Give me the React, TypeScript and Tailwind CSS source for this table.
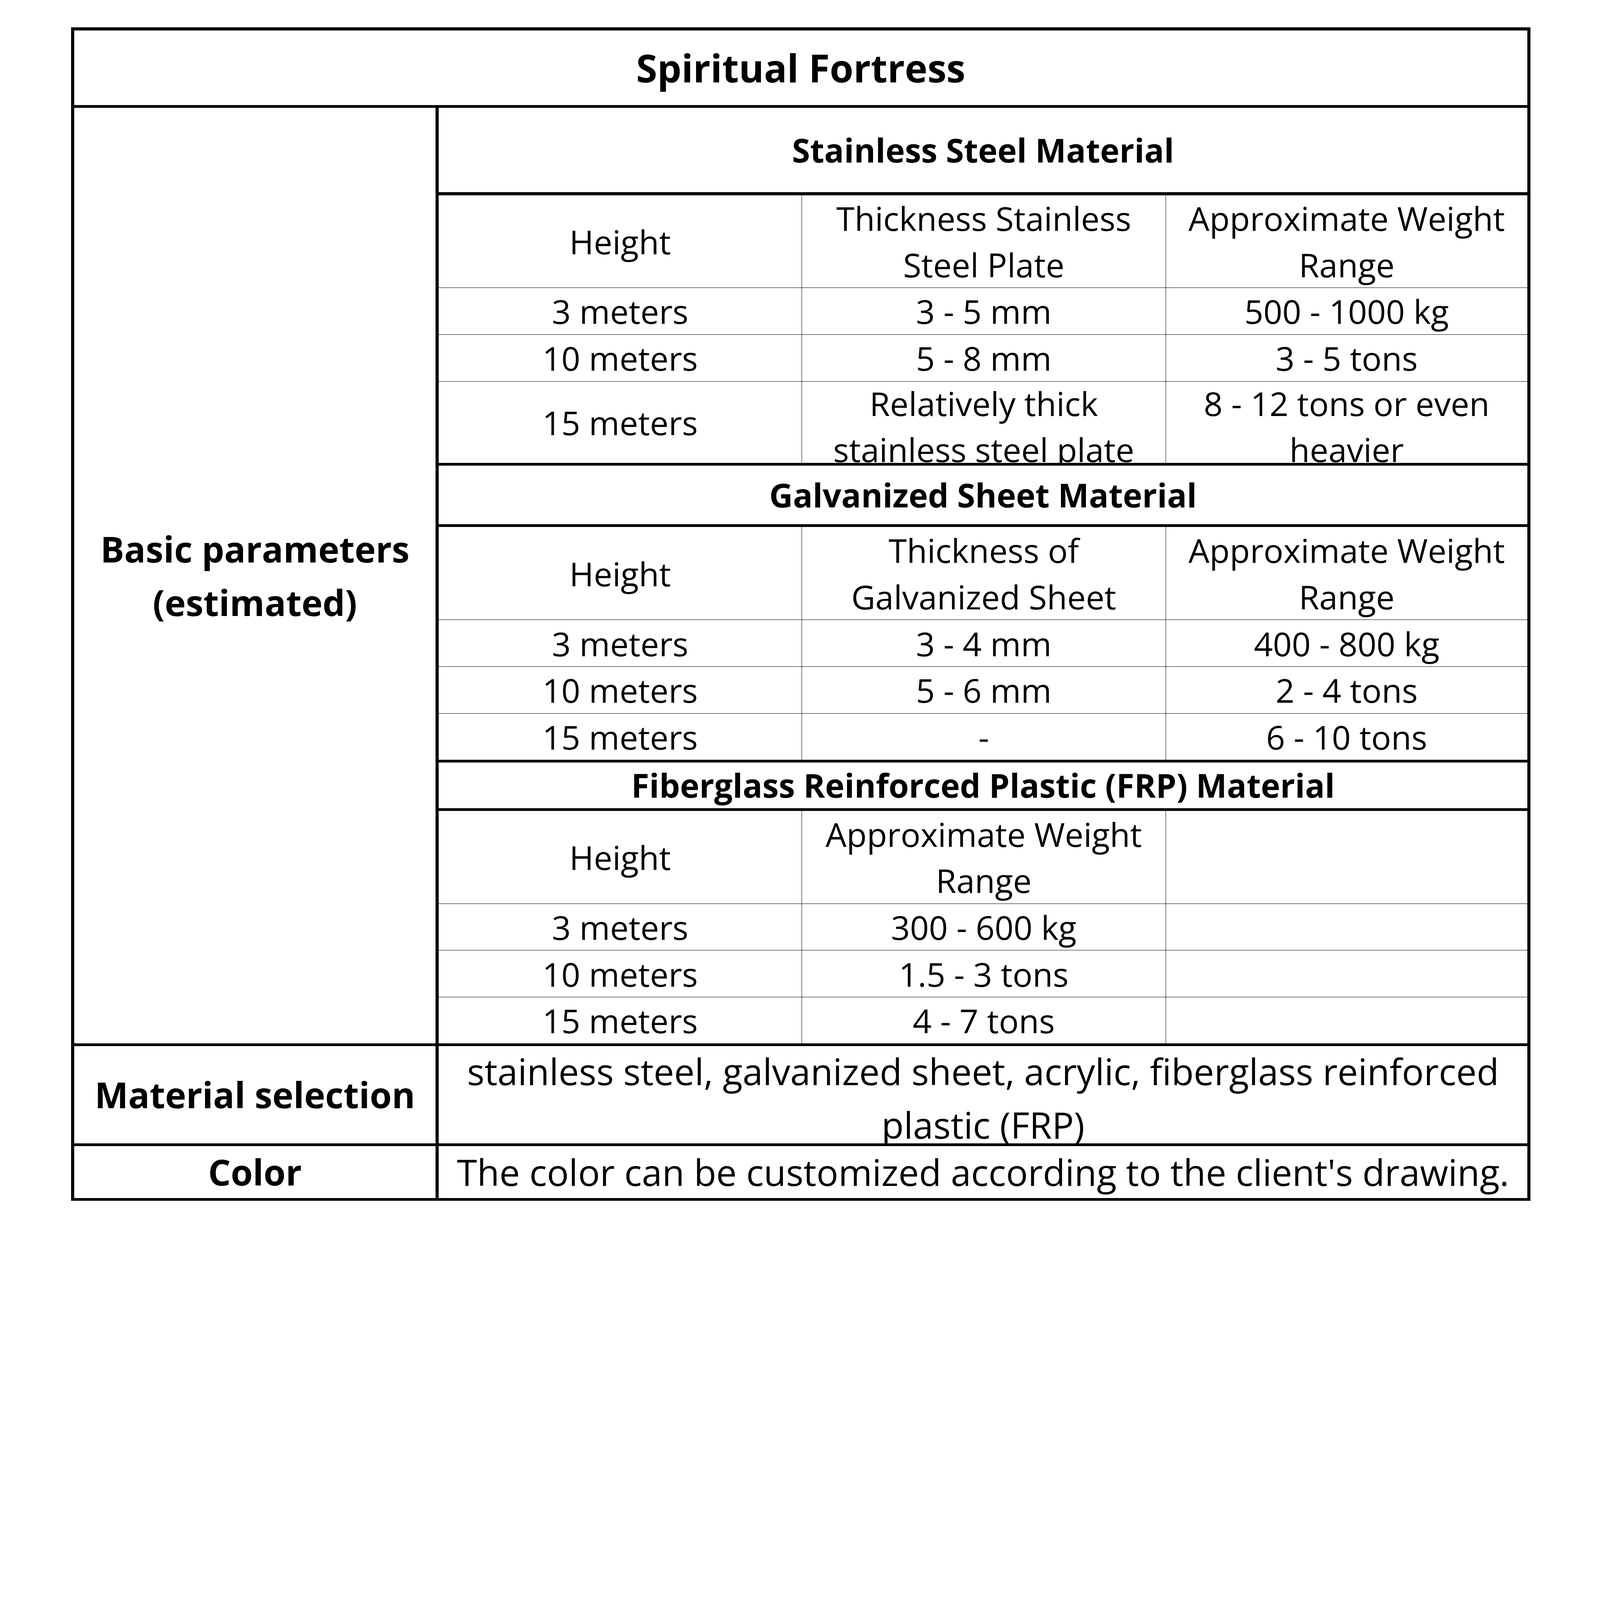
import React from "react";

type Row = { h: string; cells: string[]; last?: boolean; shift?: boolean };
type Sec = { title: string; titleH: string; titleB: string; rows: Row[] };

const sections: Sec[] = [
  {
    title: "Stainless Steel Material",
    titleH: "h-[223.6px]",
    titleB: "border-b-[8.2px]",
    rows: [
      { h: "h-[237.4px]", cells: ["Height", "Thickness Stainless Steel Plate", "Approximate Weight Range"] },
      { h: "h-[120px]", cells: ["3 meters", "3 - 5 mm", "500 - 1000 kg"] },
      { h: "h-[119.5px]", cells: ["10 meters", "5 - 8 mm", "3 - 5 tons"] },
      {
        h: "h-[215.9px]",
        cells: ["15 meters", "Relatively thick stainless steel plate", "8 - 12 tons or even heavier"],
        last: true,
        shift: true,
      },
    ],
  },
  {
    title: "Galvanized Sheet Material",
    titleH: "h-[156.9px]",
    titleB: "border-b-[7.7px]",
    rows: [
      { h: "h-[237.9px]", cells: ["Height", "Thickness of Galvanized Sheet", "Approximate Weight Range"] },
      { h: "h-[120px]", cells: ["3 meters", "3 - 4 mm", "400 - 800 kg"] },
      { h: "h-[119.5px]", cells: ["10 meters", "5 - 6 mm", "2 - 4 tons"] },
      { h: "h-[125.1px]", cells: ["15 meters", "-", "6 - 10 tons"], last: true },
    ],
  },
  {
    title: "Fiberglass Reinforced Plastic (FRP) Material",
    titleH: "h-[124.1px]",
    titleB: "border-b-[7.7px]",
    rows: [
      { h: "h-[237.9px]", cells: ["Height", "Approximate Weight Range", ""] },
      { h: "h-[119.5px]", cells: ["3 meters", "300 - 600 kg", ""] },
      { h: "h-[120px]", cells: ["10 meters", "1.5 - 3 tons", ""] },
      { h: "h-[117.4px]", cells: ["15 meters", "4 - 7 tons", ""] },
    ],
  },
];

const cellBase =
  "flex items-center justify-center text-center overflow-hidden px-[20px] text-[84.8px] leading-[118.4px]";

function DataRow({ row, isFinal }: { row: Row; isFinal: boolean }) {
  const rb = isFinal ? "" : row.last ? "border-b-[7.7px]" : "border-b-[1.1px]";
  const sh = row.shift ? "pt-[20px]" : "";
  return (
    <div className={`flex ${row.h} ${rb} border-black`}>
      <div className={`${cellBase} w-[929.6px] border-r-[1.1px] border-black`}>
        <span>{row.cells[0]}</span>
      </div>
      <div className={`${cellBase} ${sh} w-[932.2px] border-r-[1.1px] border-black`}>
        <span>{row.cells[1]}</span>
      </div>
      <div className={`${cellBase} ${sh} flex-1`}>
        <span>{row.cells[2]}</span>
      </div>
    </div>
  );
}

export default function App() {
  return (
    <div className="w-[4110px] h-[3160px] bg-white pl-[182px] pt-[70.2px] text-black font-['Open_Sans','Noto_Sans',sans-serif]">
      <div className="w-[3736px] border-[8.2px] border-b-[7.7px] border-black flex flex-col">
        {/* Title */}
        <div className="h-[197.9px] border-b-[7.7px] border-black flex items-center justify-center">
          <span className="text-[98px] font-bold leading-[135px]">Spiritual Fortress</span>
        </div>

        {/* Basic parameters */}
        <div className="h-[2402.4px] border-b-[7.7px] border-black flex">
          <div className="w-[933.2px] border-r-[8.2px] border-black flex items-center justify-center text-center">
            <span className="text-[91px] font-bold leading-[136.4px]">
              Basic parameters
              <br />
              (estimated)
            </span>
          </div>
          <div className="flex-1 flex flex-col">
            {sections.map((s, si) => (
              <div key={s.title} className="flex flex-col">
                <div
                  className={`${s.titleH} ${s.titleB} border-black flex items-center justify-center overflow-hidden`}
                >
                  <span className="text-[83.8px] font-bold leading-[120px] whitespace-nowrap">{s.title}</span>
                </div>
                {s.rows.map((r, ri) => (
                  <DataRow
                    key={ri}
                    row={r}
                    isFinal={si === sections.length - 1 && ri === s.rows.length - 1}
                  />
                ))}
              </div>
            ))}
          </div>
        </div>

        {/* Material selection */}
        <div className="h-[255.3px] border-b-[7.7px] border-black flex">
          <div className="w-[933.2px] border-r-[8.2px] border-black flex items-center justify-center">
            <span className="text-[91px] font-bold leading-[136.4px] whitespace-nowrap">Material selection</span>
          </div>
          <div className="flex-1 flex items-center justify-center text-center overflow-hidden px-[15px] pt-[16px]">
            <span className="text-[93.4px] leading-[136.4px]">
              stainless steel, galvanized sheet, acrylic, fiberglass reinforced plastic (FRP)
            </span>
          </div>
        </div>

        {/* Color */}
        <div className="h-[132.8px] flex">
          <div className="w-[933.2px] border-r-[8.2px] border-black flex items-center justify-center">
            <span className="text-[91px] font-bold leading-[136.4px]">Color</span>
          </div>
          <div className="flex-1 flex items-center justify-center text-center overflow-hidden">
            <span className="text-[93.4px] leading-[136.4px] whitespace-nowrap">
              The color can be customized according to the client's drawing.
            </span>
          </div>
        </div>
      </div>
    </div>
  );
}
